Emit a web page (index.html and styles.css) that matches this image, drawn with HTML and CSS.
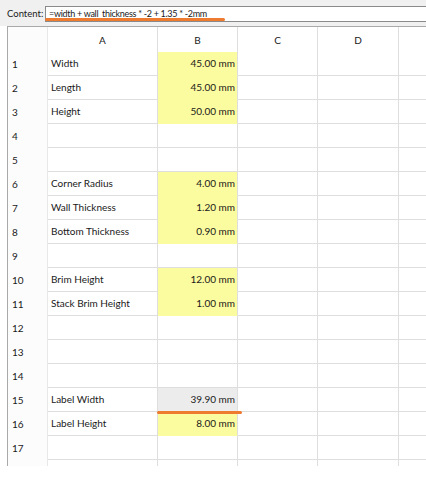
FILE: index.html
```html
<!DOCTYPE html>
<html>
<head>
<meta charset="utf-8">
<link rel="stylesheet" href="styles.css">
</head>
<body>
<div class="toolbar">
  <span class="label">Content:</span>
  <div class="input"><span class="formula">=width + wall_thickness * -2 + 1.35 * -2mm</span><span class="mark mark-formula"></span></div>
</div>
<div class="frame">
  <div class="sheet">
    <div class="hc rh"></div><div class="hc">A</div><div class="hc">B</div><div class="hc">C</div><div class="hc">D</div><div class="hc"></div>

    <div class="rh">1</div><div class="c">Width</div><div class="c v y">45.00 mm</div><div class="c"></div><div class="c"></div><div class="c"></div>
    <div class="rh">2</div><div class="c">Length</div><div class="c v y">45.00 mm</div><div class="c"></div><div class="c"></div><div class="c"></div>
    <div class="rh">3</div><div class="c">Height</div><div class="c v y">50.00 mm</div><div class="c"></div><div class="c"></div><div class="c"></div>
    <div class="rh">4</div><div class="c"></div><div class="c"></div><div class="c"></div><div class="c"></div><div class="c"></div>
    <div class="rh">5</div><div class="c"></div><div class="c"></div><div class="c"></div><div class="c"></div><div class="c"></div>
    <div class="rh">6</div><div class="c">Corner Radius</div><div class="c v y">4.00 mm</div><div class="c"></div><div class="c"></div><div class="c"></div>
    <div class="rh">7</div><div class="c">Wall Thickness</div><div class="c v y">1.20 mm</div><div class="c"></div><div class="c"></div><div class="c"></div>
    <div class="rh">8</div><div class="c">Bottom Thickness</div><div class="c v y">0.90 mm</div><div class="c"></div><div class="c"></div><div class="c"></div>
    <div class="rh">9</div><div class="c"></div><div class="c"></div><div class="c"></div><div class="c"></div><div class="c"></div>
    <div class="rh">10</div><div class="c">Brim Height</div><div class="c v y">12.00 mm</div><div class="c"></div><div class="c"></div><div class="c"></div>
    <div class="rh">11</div><div class="c">Stack Brim Height</div><div class="c v y">1.00 mm</div><div class="c"></div><div class="c"></div><div class="c"></div>
    <div class="rh">12</div><div class="c"></div><div class="c"></div><div class="c"></div><div class="c"></div><div class="c"></div>
    <div class="rh">13</div><div class="c"></div><div class="c"></div><div class="c"></div><div class="c"></div><div class="c"></div>
    <div class="rh">14</div><div class="c"></div><div class="c"></div><div class="c"></div><div class="c"></div><div class="c"></div>
    <div class="rh">15</div><div class="c">Label Width</div><div class="c v g">39.90 mm<span class="mark mark-cell"></span></div><div class="c"></div><div class="c"></div><div class="c"></div>
    <div class="rh">16</div><div class="c">Label Height</div><div class="c v y">8.00 mm</div><div class="c"></div><div class="c"></div><div class="c"></div>
    <div class="rh">17</div><div class="c"></div><div class="c"></div><div class="c"></div><div class="c"></div><div class="c"></div>
    <div class="rh"></div><div class="c"></div><div class="c"></div><div class="c"></div><div class="c"></div><div class="c"></div>
  </div>
</div>
</body>
</html>
```

FILE: styles.css
```css
* { box-sizing: border-box; }
html, body { margin: 0; padding: 0; background: #ffffff; }
body {
  font-family: Lato, "Noto Sans", sans-serif;
  font-size: 10px;
  color: #1a1a1a;
  width: 426px;
  height: 480px;
  overflow: hidden;
}
.toolbar {
  height: 26px;
  background: #f0f0f0;
  display: flex;
  align-items: flex-start;
  padding: 6px 0 0 7px;
}
.label {
  flex: none;
  width: 38px;
  line-height: 16px;
  font-size: 9.5px;
  white-space: nowrap;
  color: #1a1a1a;
}
.input {
  position: relative;
  flex: 1;
  height: 16px;
  background: #ffffff;
  border: 1px solid #8a8a8a;
  border-right: none;
  padding-left: 3px;
  line-height: 14px;
  font-size: 9px;
  letter-spacing: -0.3px;
  white-space: nowrap;
}
.mark {
  position: absolute;
  z-index: 5;
  height: 3px;
  background: #ee7b2f;
  border-radius: 2px;
}
.mark-formula { left: -1px; top: 11px; width: 180px; }
.frame {
  margin-left: 7px;
  height: 440px;
  border-top: 1px solid #a9a9a9;
  border-left: 1px solid #a9a9a9;
  overflow: hidden;
}
.sheet {
  display: grid;
  grid-template-columns: 40px 110px 80px 80px 81px 80px;
  grid-template-rows: 25px;
  grid-auto-rows: 24px;
}
.hc {
  text-align: center;
  line-height: 25px;
  padding-top: 1px;
  border-right: 1px solid #dedede;
}
.rh {
  padding-left: 4px;
  line-height: 24px;
  border-right: 1px solid #e8e8e8;
  background: #fcfcfc;
}
.hc.rh { background: #fcfcfc; }
.c {
  position: relative;
  padding: 0 3px;
  line-height: 23px;
  border-right: 1px solid #dedede;
  border-bottom: 1px solid #dedede;
  white-space: nowrap;
}
.v { text-align: right; padding-right: 2px; }
.y { background: #fbfb9f; border-bottom-color: #fbfb9f; }
.g { background: #ececec; }
.mark-cell { left: -1px; bottom: -3px; width: 85px; }
```
